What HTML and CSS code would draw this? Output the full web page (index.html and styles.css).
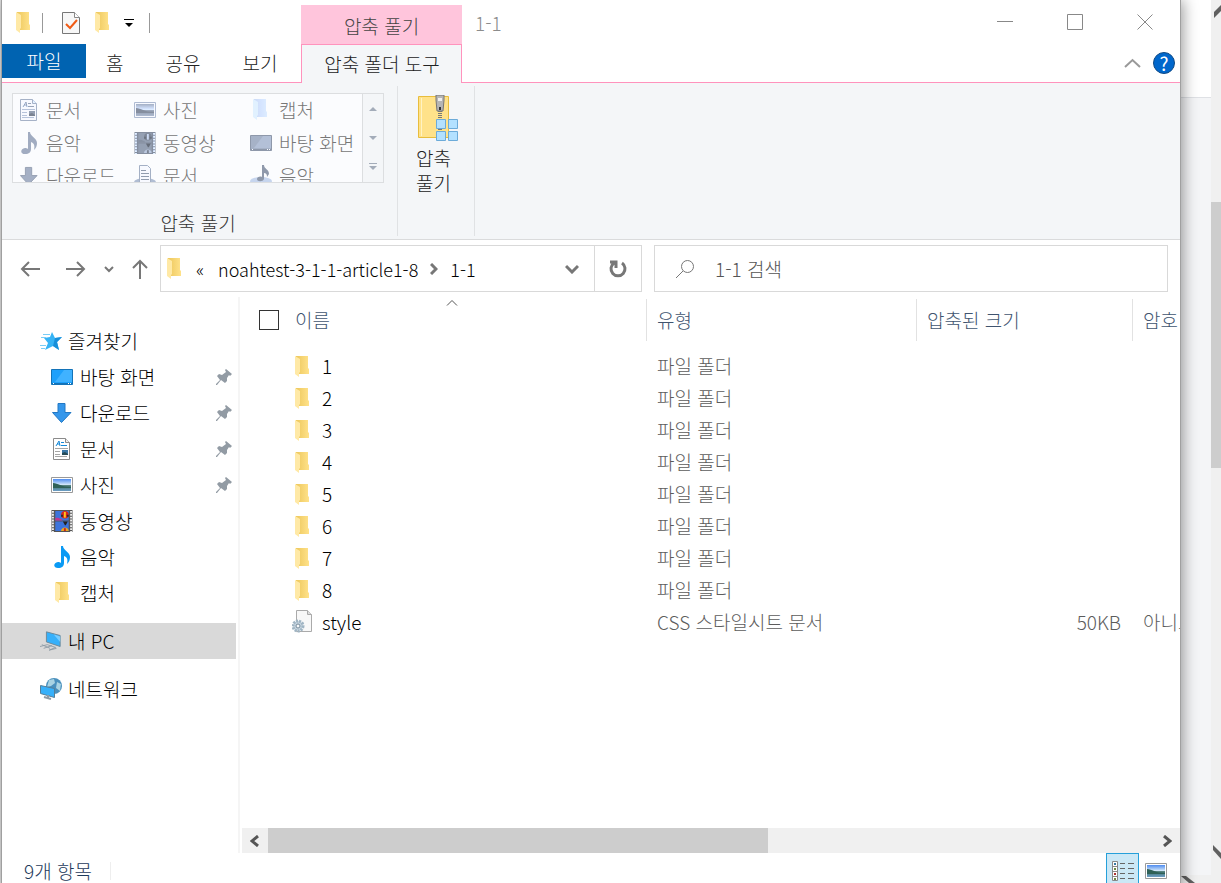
FILE: index.html
```html
<!DOCTYPE html>
<html lang="ko">
<head>
    <title>1-1</title>
    <meta charset="utf-8" />
    <meta name="viewport" content="width=device-width, initial-scale=1" />
    <link rel="stylesheet" href="styles.css">
</head>
<body>
    <!-- Shared icons -->
    <svg class="icon-defs" aria-hidden="true">
        <linearGradient id="folder-back"><stop offset="0" stop-color="#edc75c"/><stop offset="1" stop-color="#ffe28a"/></linearGradient>
        <linearGradient id="sky" x2="0" y2="1"><stop offset="0" stop-color="#4f8cf0"/><stop offset=".5" stop-color="#d9ecfa"/><stop offset=".55" stop-color="#3f7068"/><stop offset="1" stop-color="#6d9fc8"/></linearGradient>
        <symbol id="folder" viewBox="0 0 14 22">
            <path d="M1 0h12v12l1 1v5H1z" fill="url(#folder-back)"/>
            <path d="M0 0l5 3v13l-1 1v4l-4-3z" fill="#ffe9a6"/>
        </symbol>
        <symbol id="check-doc" viewBox="0 0 18 22">
            <path d="M.5.5h12l5 5v16H.5z" fill="#f7f7f7" stroke="#777"/>
            <path d="M12.500.5v5h5" fill="#fff" stroke="#888"/>
            <path d="M4 12l4 4 7-8" fill="none" stroke="#f05a14" stroke-width="2"/>
        </symbol>
        <symbol id="desktop" viewBox="0 0 22 16">
            <path d="M.5.5h21v15H.5z" fill="#1da0fb" stroke="#1373b8"/>
            <path d="M13 1h8v12H4z" fill="#40b2ff"/>
            <path d="M1 14.500h20" stroke="#1373b8"/>
            <path d="M2 14.500h2M17 14.500h3" stroke="#fff" stroke-dasharray="1 1"/>
        </symbol>
        <symbol id="download" viewBox="0 0 20 20">
            <path d="M6 .5h7v9h6L9.500 19.500.5 9.500H6z" fill="#3597eb" stroke="#2378c4"/>
        </symbol>
        <symbol id="document" viewBox="0 0 18 22">
            <path d="M.5.5h12l4 4v17H.5z" fill="#fff" stroke="#8b8b8b"/>
            <path d="M12.500.5v4h4" fill="#eee" stroke="#8b8b8b"/>
            <path d="M3 8l3-5 1 5M4 6h3M8 4.500h3M8 7.500h6" fill="none" stroke="#1689d8"/>
            <path d="M2 10.500h13M2 13.500h5M2 16.500h5M2 18.500h12" stroke="#a5a5a5"/>
            <path d="M9 12h6v5H9z" fill="#3b78a8"/><path d="M9 15l3-1 3 2v1H9z" fill="#264b58"/>
        </symbol>
        <symbol id="picture" viewBox="0 0 22 16">
            <path d="M.5.5h21v15H.5z" fill="#fff" stroke="#999"/>
            <path d="M2 2h18v12H2z" fill="url(#sky)"/>
            <path d="M2 6c5 0 8 4 18 4v1H2z" fill="#2f6157"/>
        </symbol>
        <symbol id="video" viewBox="0 0 22 23">
            <path d="M0 0h22v23H0z" fill="#555"/>
            <path d="M1.500 1v22M20.500 1v22" stroke="#eee" stroke-width="2" stroke-dasharray="2 1"/>
            <path d="M4 1h14v10H4zM4 12h14v10H4z" fill="#3c74dc"/>
            <circle cx="14" cy="5" r="4" fill="#d8261c"/><path d="M13 2h2v6h-2z" fill="#ffc51d"/><path d="M10 5h2v2h-2zM16 5h2v2h-2z" fill="#2b2b2b"/>
            <path d="M4 8h3l4 2v1H4z" fill="#c0388f"/><path d="M12 12h5l-2 4h-1z" fill="#222"/>
            <path d="M10 22c0-5 8-5 8 0z" fill="#e9a820"/><path d="M13 19h2v3h-2z" fill="#c22"/>
        </symbol>
        <symbol id="music" viewBox="0 0 16 22">
            <path d="M7 0h2c0 4 7 6 7 11 0 3-1 5-3 7 1-5 0-7-3-8v7c0 3-2 5-6 5-5 0-5-5 0-6 1 0 2 0 3 1z" fill="#0a9af4"/>
        </symbol>
        <symbol id="doc-disc" viewBox="0 0 22 22">
            <ellipse cx="11" cy="17" rx="11" ry="4" fill="#7f9fc4"/>
            <path d="M5.500.5h8l3 3v14h-11z" fill="#fff" stroke="#888"/>
            <path d="M7 5.500h5M7 8.500h8M7 11.500h8M7 14.500h8" stroke="#669"/>
        </symbol>
        <symbol id="music-disc" viewBox="0 0 22 22">
            <ellipse cx="11" cy="16" rx="11" ry="4" fill="#a9c2dd"/>
            <path d="M12 0h2c0 4 5 4 5 9l-2 3c0-3-1-4-3-4v6c-1 3-7 3-7 0 0-2 3-3 5-2z" fill="#2b6fb5"/>
        </symbol>
        <symbol id="star" viewBox="0 0 22 20">
            <path d="M12 1l3 6 7-1-5 5 2 8-6-4-8 4 3-7-4-5 6-1z" fill="#36b3f5"/>
            <path d="M15 7l7-1-5 5 2 8-6-4z" fill="#168fda"/>
            <path d="M3 3.500h7M1 6.500h5M0 14.500h6M1 17.500h4" stroke="#79cdf7"/>
        </symbol>
        <symbol id="pc" viewBox="0 0 24 22">
            <path d="M7 1l15 4v12L7 12z" fill="#36b0fa" stroke="#6c8595"/>
            <path d="M15 4l7 2v6z" fill="#77ccff"/>
            <path d="M0 17l8-2 9 3-7 3M4 19l9-3M2 15l9 4M10 21l8-2" fill="none" stroke="#8e9ba5"/>
        </symbol>
        <symbol id="network" viewBox="0 0 22 22">
            <circle cx="14" cy="8" r="8" fill="#4a90bd"/>
            <path d="M9 2l5-1 1 4-4 3-4 1zM17 4l4 2-1 7-4-3z" fill="#a9d3e3"/>
            <path d="M.5 7.500l14 3v9l-14-4z" fill="#36b0fa" stroke="#547e98"/>
            <path d="M4 19l7 2M8 17v4" stroke="#8e9ba5" stroke-width="2"/>
        </symbol>
        <symbol id="pin" viewBox="0 0 16 16">
            <path d="M10 0l6 5-2 2-1-1-2 3v3l-2 2-4-3-4 5H0v-1l4-4-3-4 2-2 3 1 4-3-1-2z" fill="#929ba4"/>
        </symbol>
        <symbol id="css-file" viewBox="0 0 20 24">
            <path d="M4.500.5h11l4 4v17h-15z" fill="#f8f8f8" stroke="#aaa"/>
            <path d="M15.500.5v4h4" fill="#ddd" stroke="#aaa"/>
            <circle cx="6" cy="16" r="5" fill="#c5d4df" stroke="#9fb4c3" stroke-width="3" stroke-dasharray="2 1"/>
            <circle cx="6" cy="16" r="2" fill="#f7f9fb" stroke="#768b9b"/>
        </symbol>
    </svg>

    <div id="desktop-view">
        <div class="page-left"></div>

        <div id="window">
            <header class="title-bar">
                <div class="quick-access">
                    <svg class="folder"><use href="#folder"/></svg>
                    <span class="divider"></span>
                    <button type="button" aria-label="속성"><svg class="doc"><use href="#check-doc"/></svg></button>
                    <button type="button" aria-label="새 폴더"><svg class="folder"><use href="#folder"/></svg></button>
                    <button type="button" aria-label="사용자 지정"><svg width="10" height="8" viewBox="0 0 10 8"><path d="M0 0h10v1H0zM1 4h8L5 8z"/></svg></button>
                    <span class="divider"></span>
                </div>
                <div class="context-title">압축 풀기</div>
                <h1>1-1</h1>
                <div class="window-buttons">
                    <button type="button" aria-label="최소화"><svg viewBox="0 0 16 16"><path d="M0 7.500h16"/></svg></button>
                    <button type="button" aria-label="최대화"><svg viewBox="0 0 16 16"><path d="M.5.5h15v15H.5z"/></svg></button>
                    <button type="button" aria-label="닫기"><svg viewBox="0 0 16 16"><path d="M.5.5l15 15M15.500.5l-15 15"/></svg></button>
                </div>
            </header>

            <nav class="tabs">
                <button type="button" class="tab tab-file">파일</button>
                <button type="button" class="tab">홈</button>
                <button type="button" class="tab">공유</button>
                <button type="button" class="tab">보기</button>
                <button type="button" class="tab tab-active">압축 폴더 도구</button>
                <div class="tab-tools">
                    <button type="button" aria-label="리본 최소화"><svg width="17" height="10" viewBox="0 0 17 10"><path d="M1 9l7.500-7L16 9" fill="none" stroke="#999" stroke-width="2"/></svg></button>
                    <button type="button" class="help">?</button>
                </div>
            </nav>

            <section class="ribbon">
                <div class="ribbon-group">
                    <div class="gallery">
                        <div class="gallery-list">
                            <button type="button"><svg class="doc"><use href="#document"/></svg>문서</button>
                            <button type="button"><svg class="wide"><use href="#picture"/></svg>사진</button>
                            <button type="button"><svg class="folder"><use href="#folder"/></svg>캡처</button>
                            <button type="button"><svg class="doc"><use href="#music"/></svg>음악</button>
                            <button type="button"><svg class="square"><use href="#video"/></svg>동영상</button>
                            <button type="button"><svg class="wide"><use href="#desktop"/></svg>바탕 화면</button>
                            <button type="button"><svg class="doc"><use href="#download"/></svg>다운로드</button>
                            <button type="button"><svg class="square"><use href="#doc-disc"/></svg>문서</button>
                            <button type="button"><svg class="square"><use href="#music-disc"/></svg>음악</button>
                        </div>
                        <div class="gallery-spin">
                            <button type="button" aria-label="위로"><svg viewBox="0 0 8 8"><path d="M0 6h8L4 2z"/></svg></button>
                            <button type="button" aria-label="아래로"><svg viewBox="0 0 8 8"><path d="M0 2h8L4 6z"/></svg></button>
                            <button type="button" aria-label="자세히"><svg viewBox="0 0 8 8"><path d="M0 0h8v1H0zM0 3h8L4 7z"/></svg></button>
                        </div>
                    </div>
                    <div class="group-label">압축 풀기</div>
                </div>
                <div class="ribbon-group ribbon-extract">
                    <button type="button">
                        <svg width="42" height="46" viewBox="0 0 42 46">
                            <path d="M1.500 1.500h30v41h-30z" fill="#ffe28a" stroke="#e8bd3d"/>
                            <path d="M4.500 3v38" stroke="#fff3c4"/>
                            <path d="M23 14v31" stroke="#777" stroke-width="4" stroke-dasharray="1 1"/>
                            <path d="M19 0h8v5l-1 11h-6L19 5z" fill="#b5b5b5" stroke="#777"/><path d="M21 3h4v3h-4z" fill="#eee"/><path d="M22 12h2v3h-2z" fill="#333"/>
                            <path d="M19.500 24.500h9v9h-9zM31.500 24.500h9v9h-9zM19.500 36.500h9v9h-9zM31.500 36.500h9v9h-9z" fill="#b3e1ff" stroke="#6cabd9"/>
                        </svg>
                        <span>압축<br>풀기</span>
                    </button>
                </div>
            </section>

            <div class="nav-bar">
                <div class="nav-buttons">
                    <button type="button" aria-label="뒤로"><svg width="20" height="16" viewBox="0 0 20 16"><path d="M20 8H2M9 1L2 8l7 7"/></svg></button>
                    <button type="button" aria-label="앞으로"><svg width="20" height="16" viewBox="0 0 20 16"><path d="M0 8h18M11 1l7 7-7 7"/></svg></button>
                    <button type="button" aria-label="최근 위치"><svg width="10" height="8" viewBox="0 0 10 8"><path d="M1 2l4 4 4-4"/></svg></button>
                    <button type="button" aria-label="위로"><svg width="16" height="20" viewBox="0 0 16 20"><path d="M8 20V2M1 9l7-7 7 7"/></svg></button>
                </div>
                <div class="address">
                    <svg class="folder"><use href="#folder"/></svg>
                    <span class="more">«</span>
                    <a href="#">noahtest-3-1-1-article1-8</a>
                    <svg class="line" width="8" height="12" viewBox="0 0 8 12"><path d="M1 1l5 5-5 5"/></svg>
                    <a href="#">1-1</a>
                    <button type="button" class="history" aria-label="이전 위치"><svg class="line" width="14" height="10" viewBox="0 0 14 10"><path d="M1 2l6 6 6-6"/></svg></button>
                    <button type="button" class="refresh" aria-label="새로 고침"><svg class="line" width="18" height="18" viewBox="0 0 18 18"><path d="M13 3a7 7 0 1 1-8 0M1 2h6v6"/></svg></button>
                </div>
                <label class="search">
                    <svg width="20" height="20" viewBox="0 0 20 20"><circle cx="12.500" cy="7.500" r="6" fill="none" stroke="#777"/><path d="M8 12l-7 7" stroke="#777"/></svg>
                    <input type="text" placeholder="1-1 검색" aria-label="1-1 검색">
                </label>
            </div>

            <main>
                <aside class="sidebar">
                    <a href="#" class="root"><svg class="square"><use href="#star"/></svg>즐겨찾기</a>
                    <a href="#"><svg class="wide"><use href="#desktop"/></svg>바탕 화면<svg class="pin"><use href="#pin"/></svg></a>
                    <a href="#"><svg class="square-small"><use href="#download"/></svg>다운로드<svg class="pin"><use href="#pin"/></svg></a>
                    <a href="#"><svg class="square"><use href="#document"/></svg>문서<svg class="pin"><use href="#pin"/></svg></a>
                    <a href="#"><svg class="wide"><use href="#picture"/></svg>사진<svg class="pin"><use href="#pin"/></svg></a>
                    <a href="#"><svg class="square"><use href="#video"/></svg>동영상</a>
                    <a href="#"><svg class="square"><use href="#music"/></svg>음악</a>
                    <a href="#"><svg class="square"><use href="#folder"/></svg>캡처</a>
                    <a href="#" class="root selected"><svg class="square"><use href="#pc"/></svg>내 PC</a>
                    <a href="#" class="root"><svg class="square"><use href="#network"/></svg>네트워크</a>
                </aside>

                <section class="files">
                    <div class="file-scroll">
                        <table>
                            <colgroup><col class="col-name"><col class="col-type"><col class="col-size"><col></colgroup>
                            <thead>
                                <tr>
                                    <th>
                                        <svg class="sort" viewBox="0 0 12 6"><path d="M1 5.500l5-5 5 5" fill="none" stroke="#555"/></svg>
                                        <label><input type="checkbox">이름</label>
                                    </th>
                                    <th>유형</th>
                                    <th>압축된 크기</th>
                                    <th>암호</th>
                                </tr>
                            </thead>
                            <tbody>
                                <tr><td><svg class="folder"><use href="#folder"/></svg>1</td><td>파일 폴더</td><td></td><td></td></tr>
                                <tr><td><svg class="folder"><use href="#folder"/></svg>2</td><td>파일 폴더</td><td></td><td></td></tr>
                                <tr><td><svg class="folder"><use href="#folder"/></svg>3</td><td>파일 폴더</td><td></td><td></td></tr>
                                <tr><td><svg class="folder"><use href="#folder"/></svg>4</td><td>파일 폴더</td><td></td><td></td></tr>
                                <tr><td><svg class="folder"><use href="#folder"/></svg>5</td><td>파일 폴더</td><td></td><td></td></tr>
                                <tr><td><svg class="folder"><use href="#folder"/></svg>6</td><td>파일 폴더</td><td></td><td></td></tr>
                                <tr><td><svg class="folder"><use href="#folder"/></svg>7</td><td>파일 폴더</td><td></td><td></td></tr>
                                <tr><td><svg class="folder"><use href="#folder"/></svg>8</td><td>파일 폴더</td><td></td><td></td></tr>
                                <tr><td><svg class="file"><use href="#css-file"/></svg>style</td><td>CSS 스타일시트 문서</td><td>50KB</td><td>아니요</td></tr>
                            </tbody>
                        </table>
                    </div>
                    <div class="scrollbar-x">
                        <button type="button" aria-label="왼쪽"><svg width="10" height="12" viewBox="0 0 10 12"><path d="M8 1L2 6l6 5"/></svg></button>
                        <div class="track"><div class="thumb"></div></div>
                        <button type="button" aria-label="오른쪽"><svg width="10" height="12" viewBox="0 0 10 12"><path d="M2 1l6 5-6 5"/></svg></button>
                    </div>
                </section>
            </main>

            <footer>
                <span class="item-count">9개 항목</span>
                <div class="view-buttons">
                    <button type="button" class="active" aria-label="자세히">
                        <svg width="22" height="20" viewBox="0 0 22 20">
                            <path d="M.5.5h5v19h-5zM.5 5.500h5M.5 10.500h5M.5 15.500h5" fill="#fff" stroke="#888"/>
                            <path d="M2 3h2" stroke="#357ba5" stroke-width="2"/><path d="M2 8h2M2 18h2" stroke="#6b8b45" stroke-width="2"/><path d="M2 13h2" stroke="#a33" stroke-width="2"/>
                            <path d="M8 2.500h5M16 2.500h6M8 7.500h5M16 7.500h6M8 12.500h5M16 12.500h6M8 17.500h5M16 17.500h6" stroke="#666"/>
                        </svg>
                    </button>
                    <button type="button" aria-label="큰 아이콘"><svg class="wide"><use href="#picture"/></svg></button>
                </div>
            </footer>
        </div>

        <!-- Page behind the window -->
        <div class="page-right">
            <div class="page-head"></div>
            <div class="page-foot"><svg width="14" height="8" viewBox="0 0 14 8"><path d="M0 1h5l9 7H8z" fill="#606060"/></svg></div>
        </div>
        <div class="page-scrollbar">
            <svg width="10" height="20" viewBox="0 0 10 20"><path d="M3 12l7-7v6l-7 7z" fill="#606060"/></svg>
            <div class="page-thumb"></div>
            <svg width="10" height="20" viewBox="0 0 10 20"><path d="M2 0l8 8v6L2 5z" fill="#606060"/></svg>
        </div>
    </div>
</body>
</html>
```
FILE: styles.css
```css
* { box-sizing: border-box; }

body {
    margin: 0;
    font-family: "Noto Sans CJK KR", sans-serif;
    font-size: 19px;
    font-weight: 300;
    line-height: 24px;
    color: #222;
    overflow: hidden;
}

h1 { margin: 0; font-size: inherit; font-weight: inherit; }
a { color: inherit; text-decoration: none; }
svg { display: block; flex: none; }

button {
    display: flex;
    align-items: center;
    justify-content: center;
    margin: 0;
    padding: 0;
    border: 0;
    background: none;
    color: inherit;
    font: inherit;
}

/* Icon sizes */
.icon-defs { position: absolute; width: 0; height: 0; }
.folder { width: 14px; height: 22px; }
.doc { width: 18px; height: 22px; }
.wide { width: 22px; height: 16px; }
.square { width: 22px; height: 22px; }
.square-small { width: 22px; height: 20px; }
.file { width: 20px; height: 24px; }

#desktop-view {
    display: flex;
    height: 100vh;
    overflow: hidden;
    background: #f4f5f7;
}

/* The window runs a little past the bottom of the screen */
#window {
    position: relative;
    z-index: 1;
    flex: 1;
    min-width: 0;
    display: flex;
    flex-direction: column;
    height: calc(100vh + 6px);
    background: #fff;
    border: solid #a0a0a0;
    border-width: 0 1px;
    box-shadow: 2px 0 14px rgba(0, 0, 0, 0.4);
}

/* Title bar */
.title-bar { display: flex; height: 44px; flex: none; }
.quick-access {
    display: flex;
    align-items: center;
    width: 299px;
    padding: 2px 0 0 14px;
}
.quick-access > svg { margin-right: 12px; }
.quick-access button { margin-right: 15px; }
.quick-access .divider { width: 1px; height: 20px; background: #999; }
.quick-access .divider:first-of-type { margin-right: 19px; }
.context-title {
    width: 161px;
    margin-top: 5px;
    background: #ffc5dc;
    color: #444;
    line-height: 42px;
    text-align: center;
}
.title-bar h1 { margin-left: 13px; line-height: 46px; color: #8c8c8c; }
.window-buttons { display: flex; margin-left: auto; }
.window-buttons button { width: 70px; }
.window-buttons svg { width: 16px; height: 16px; stroke: #888; fill: none; }

/* Tabs */
.tabs {
    display: flex;
    flex: none;
    height: 39px;
    border-bottom: 1px solid #ff93bd;
}
.tab { height: 38px; padding: 0 21px; color: #222; }
.tab-file { width: 84px; height: 34px; margin-right: -1px; background: #0063b1; color: #fff; }
.tab-active {
    width: 161px;
    height: 39px;
    margin-left: 3px;
    padding: 0;
    border: 1px solid #ff93bd;
    border-bottom: 0;
    background: #f4f6f8;
}
.tab-tools { display: flex; align-items: center; gap: 12px; margin-left: auto; padding-right: 5px; }
.help {
    width: 22px;
    height: 22px;
    border: 1px solid #104a85;
    border-radius: 50%;
    background: #0067cc;
    color: #fff;
    font-weight: 400;
}

/* Ribbon */
.ribbon {
    display: flex;
    flex: none;
    height: 157px;
    padding: 3px 0 3px 10px;
    background: #f4f6f8;
    border-bottom: 1px solid #dadbdc;
}
.ribbon-group {
    display: flex;
    flex-direction: column;
    justify-content: space-between;
    padding: 7px 13px 0 0;
    border-right: 1px solid #e0e2e4;
}
.gallery { display: flex; height: 90px; border: 1px solid #dcdee0; }
.gallery-list {
    display: grid;
    grid-template-columns: 116px 116px 117px;
    grid-template-rows: 32px 33px 33px;
    overflow: hidden;
    background: #fbfcfe;
}
.gallery-list button { justify-content: flex-start; gap: 8px; padding-left: 7px; color: #777; white-space: nowrap; }
.gallery-list svg { filter: grayscale(1) contrast(0.5) brightness(1.2) sepia(0.5) hue-rotate(180deg); }
.gallery-list button:nth-child(3n+2),
.gallery-list button:nth-child(3n) { gap: 7px; padding-left: 5px; }
.gallery-list .folder { margin: 0 5px 0 3px; }
.gallery-spin { display: flex; flex-direction: column; width: 21px; border-left: 1px solid #dcdee0; }
.gallery-spin button { flex: 1; }
.gallery-spin svg { width: 8px; height: 8px; fill: #a3acb9; }
.group-label { padding-bottom: 1px; text-align: center; color: #333; }
.ribbon-extract { width: 77px; padding: 9px 5px 0 0; }
.ribbon-extract button { flex-direction: column; gap: 4px; line-height: 25px; color: #222; }
.ribbon-extract svg { margin-left: 8px; }

/* Address bar */
.nav-bar { display: flex; align-items: center; flex: none; height: 57px; padding: 0 12px 0 18px; }
.nav-buttons { display: flex; align-items: center; width: 140px; }
.nav-buttons button { margin-right: 18px; }
.nav-buttons button:first-child { margin-right: 26px; }
.nav-buttons svg, .line { fill: none; stroke: #777; stroke-width: 2; }
.address {
    display: flex;
    align-items: center;
    flex: 474;
    height: 47px;
    padding-left: 6px;
    border: 1px solid #d9d9d9;
    color: #000;
    font-size: 18px;
    white-space: nowrap;
}
.address .more { width: 22px; margin-left: 15px; }
.address .line { stroke-width: 3; }
.address > .line { margin: 0 12px; }
.history { margin-left: auto; padding: 0 15px; }
.refresh { width: 47px; height: 100%; border-left: 1px solid #d9d9d9; }
.search {
    display: flex;
    align-items: center;
    flex: 492;
    min-width: 0;
    height: 47px;
    margin-left: 12px;
    padding-left: 20px;
    border: 1px solid #d9d9d9;
}
.search input {
    flex: 1;
    min-width: 0;
    margin-left: 20px;
    padding: 0;
    border: 0;
    outline: 0;
    background: none;
    font: inherit;
}
.search input::placeholder { color: #555; opacity: 1; }

main { display: flex; flex: 1; min-height: 0; }

/* Sidebar */
.sidebar { width: 238px; padding: 26px 2px 0 0; border-right: 2px solid #f5f5f5; color: #000; }
.sidebar a { display: flex; align-items: center; gap: 7px; height: 36px; padding: 0 4px 0 49px; }
.sidebar .root { gap: 6px; padding-left: 38px; }
.sidebar .selected { margin: 12px 0; background: #d9d9d9; }
.sidebar .pin { width: 16px; height: 16px; margin-left: auto; }

/* File list */
.files { display: flex; flex-direction: column; flex: 1; min-width: 0; }
.file-scroll { flex: 1; overflow: hidden; }
table { width: 1760px; table-layout: fixed; border-collapse: separate; border-spacing: 0; }
.col-name { width: 407px; }
.col-type { width: 270px; }
.col-size { width: 216px; }
th, td { padding: 0 10px; text-align: left; font-weight: 300; }
th { position: relative; height: 53px; padding-bottom: 8px; color: #40546f; }
th:not(:last-child)::after {
    content: '';
    position: absolute;
    top: 2px;
    right: 0;
    width: 1px;
    height: 42px;
    background: #e2e2e2;
}
th label { display: flex; align-items: center; gap: 16px; padding-left: 9px; }
th input { appearance: none; width: 20px; height: 20px; margin: 0; border: 1px solid #333; }
.sort { position: absolute; top: 3px; left: 206px; width: 12px; height: 6px; }
td { height: 32px; color: #5c5c5c; }
td:first-child { color: #000; padding: 0 0 0 55px; }
td:nth-child(3) { text-align: right; padding-right: 12px; }
td svg { display: inline-block; vertical-align: -4px; margin-right: 13px; }
td .file { margin: 0 10px 0 -3px; }

.scrollbar-x { display: flex; height: 25px; margin-left: 2px; background: #f0f0f0; }
.scrollbar-x button { width: 26px; }
.scrollbar-x svg { fill: none; stroke: #555; stroke-width: 3; }
.track { flex: 1; }
.thumb { width: 56.4%; height: 100%; background: #cdcdcd; }

/* Status bar */
footer { display: flex; align-items: center; flex: none; height: 36px; padding: 0 11px 0 22px; color: #1e395b; }
.item-count { padding-right: 18px; border-right: 1px solid #eee; line-height: 18px; }
.view-buttons { display: flex; gap: 4px; height: 100%; margin-left: auto; }
.view-buttons button { width: 26px; }
.view-buttons .active { width: 33px; border: 1px solid #26a0da; background: #cbe8f6; }

/* Page behind */
.page-left { width: 1px; background: #e4e4e4; }
.page-right { display: flex; flex-direction: column; justify-content: space-between; width: 30px; }
.page-head { height: 98px; background: #fff; border-bottom: 1px solid #dfe1e5; }
.page-foot { height: 8px; background: #f0f0f0; }
.page-scrollbar { display: flex; flex-direction: column; justify-content: space-between; width: 10px; padding-bottom: 18px; background: #f0f0f0; }
.page-thumb { height: 266px; margin-bottom: 196px; background: #cdcdcd; }
```
